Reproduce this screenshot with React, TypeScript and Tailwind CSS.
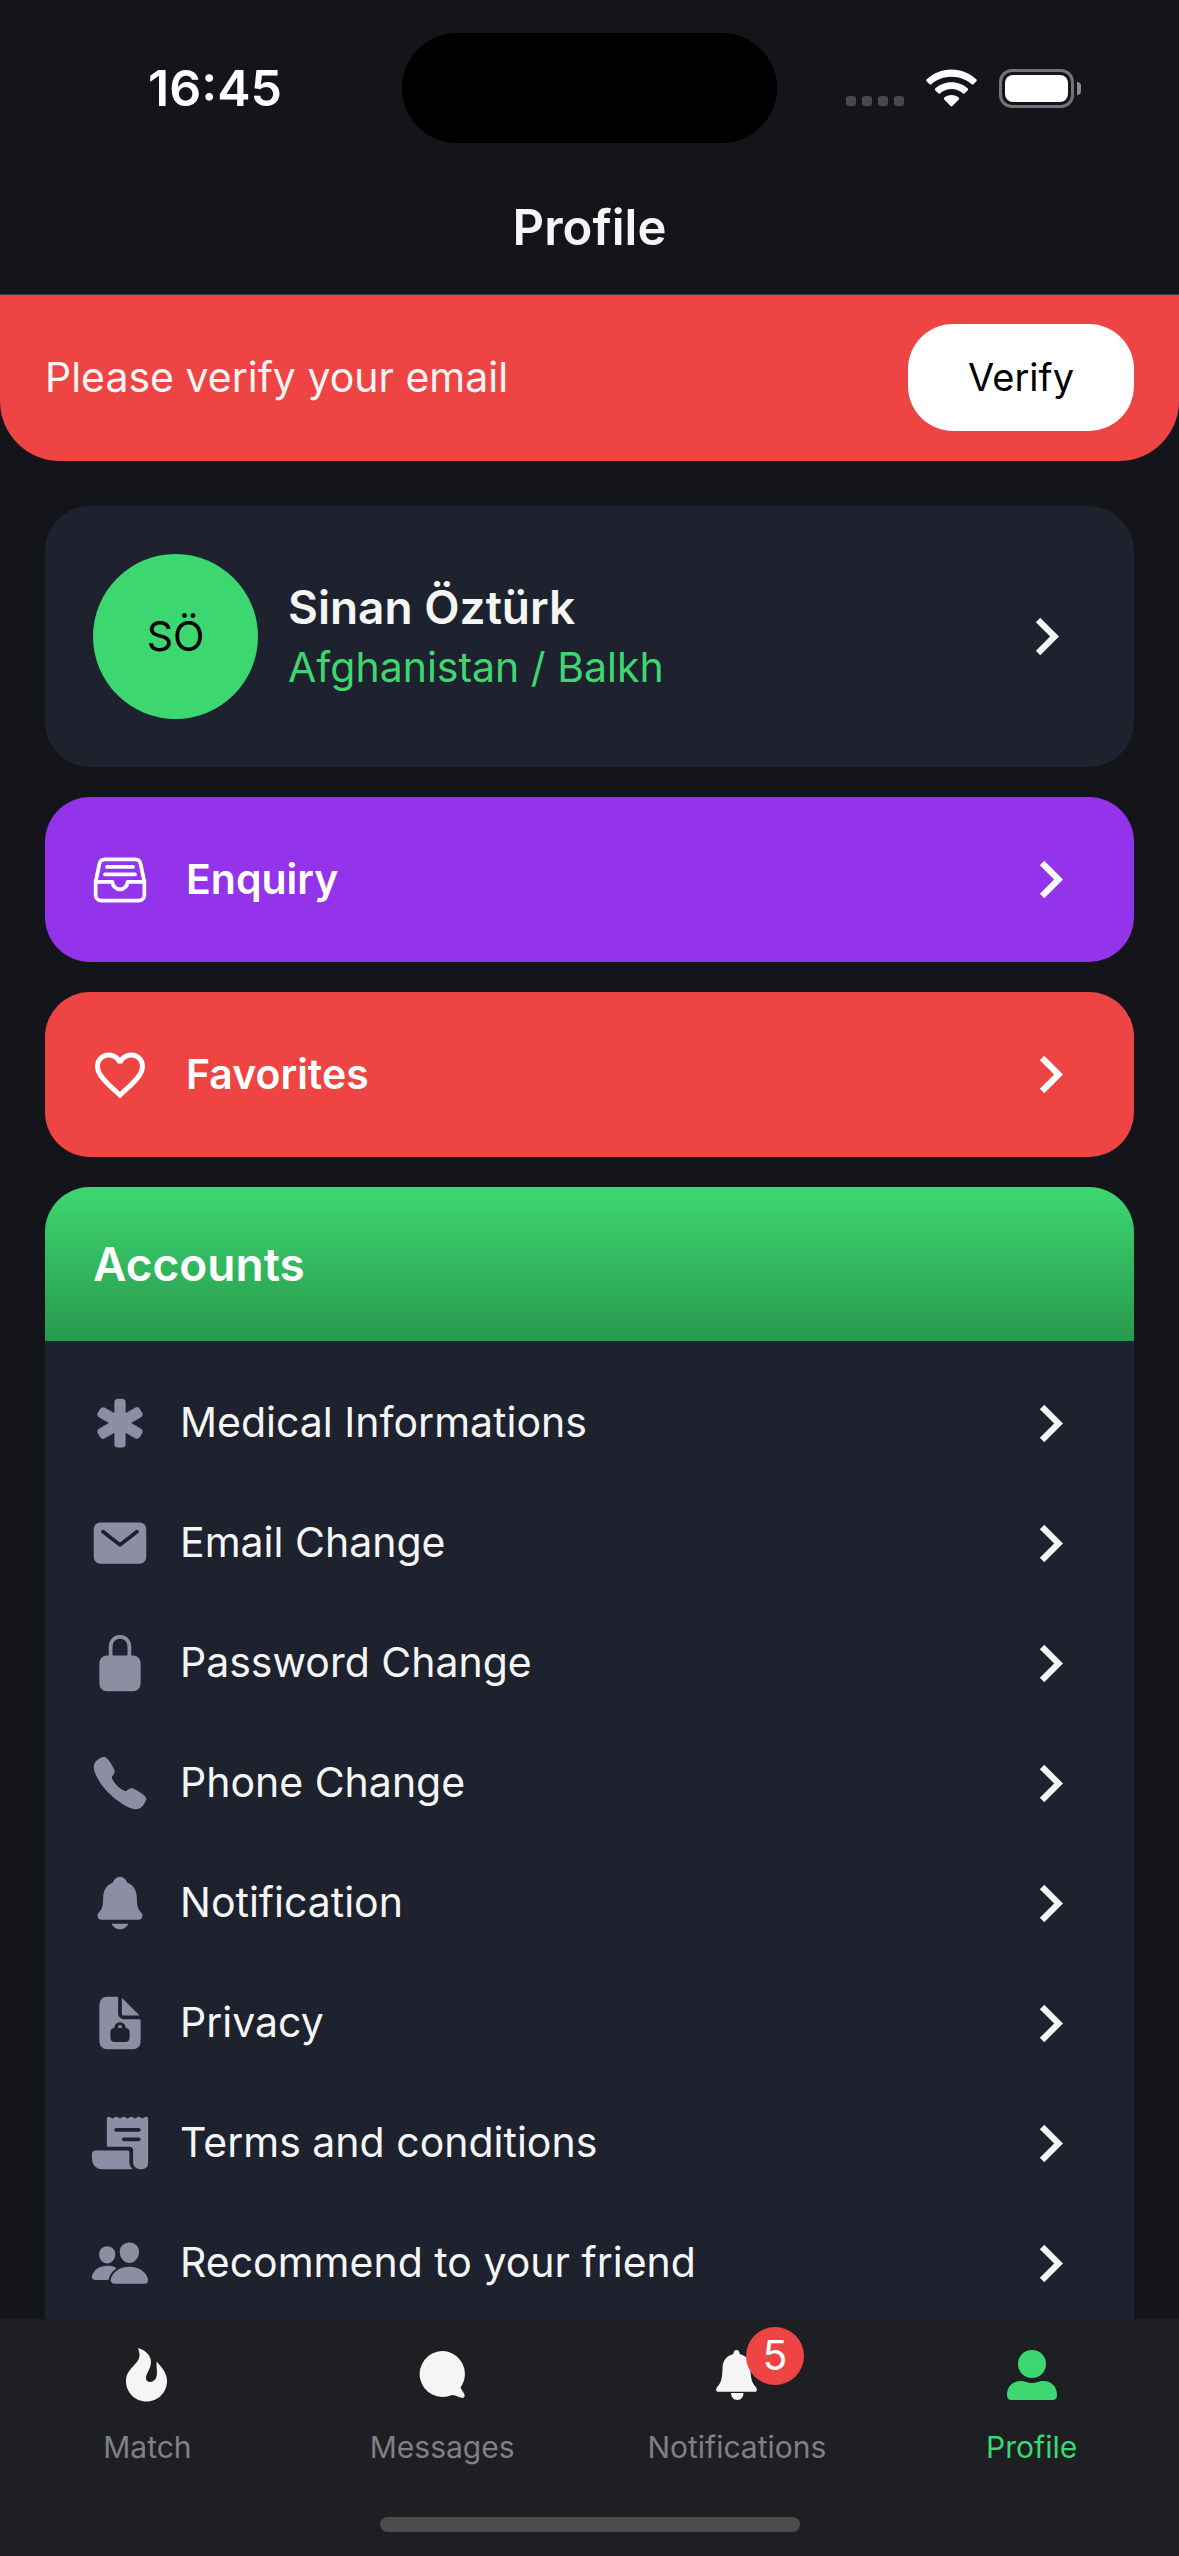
import { MdChevronRight, MdFavoriteBorder } from "react-icons/md";
import {
  IoCall,
  IoFileTrayFullOutline,
  IoLockClosed,
  IoMail,
  IoMedical,
  IoNotifications,
  IoPeople,
  IoReceipt,
} from "react-icons/io5";

function WifiIcon() {
  return (
    <svg viewBox="0 0 51 38" className="h-[38px] w-[51px]" fill="currentColor" aria-hidden="true">
      <path d="M25.5 0.5C35.3 0.5 43.8 4.3 50.3 10.3c.6.6.6 1.3.1 1.9l-3 3c-.5.5-1.200.5-1.800 0C40.200 10.400 33.200 7.700 25.500 7.700S10.800 10.400 5.400 15.200c-.6.5-1.300.5-1.800 0l-3-3c-.5-.6-.5-1.300.1-1.900C7.200 4.300 15.700.5 25.500.5Z" />
      <path d="M25.500 13.200c6.300 0 11.900 2.300 16.200 6.200.6.5.6 1.200.1 1.800l-3.100 3.100c-.5.5-1.200.5-1.700.1-3.200-2.700-7.200-4.300-11.500-4.300s-8.300 1.600-11.500 4.300c-.5.4-1.200.4-1.700-.1l-3.100-3.100c-.5-.6-.5-1.300.1-1.800 4.300-3.900 9.900-6.200 16.200-6.200Z" />
      <path d="M25.500 26c2.800 0 5.300 1 7.200 2.600.6.5.6 1.200.1 1.800l-6.400 6.600c-.5.6-1.300.6-1.800 0l-6.400-6.600c-.5-.6-.5-1.300.1-1.800C20.200 27 22.700 26 25.500 26Z" />
    </svg>
  );
}

function StatusBar() {
  return (
    <div className="grid h-44 grid-cols-[1fr_375px_1fr] items-center">
      <span className="pl-7 text-center text-[50px] leading-none font-semibold text-white">16:45</span>
      <span className="h-[110px] rounded-full bg-black" />
      <div className="ml-[69px] flex items-center text-white">
        <div className="mt-[26px] flex gap-1.5">
          {[0, 1, 2, 3].map((dot) => (
            <span key={dot} className="size-2.5 rounded-[3px] bg-[#48494d]" />
          ))}
        </div>
        <div className="ml-[22px]">
          <WifiIcon />
        </div>
        <div className="ml-[22px] h-[39px] w-[75px] rounded-[13px] border-[3px] border-[#737478] p-[3px]">
          <div className="h-full rounded-lg bg-white" />
        </div>
        <span className="ml-[3px] h-[13px] w-1 rounded-r-full bg-[#8a8b8e]" />
      </div>
    </div>
  );
}

function Chevron() {
  return <MdChevronRight className="size-[75px] shrink-0" aria-hidden="true" />;
}

function DocumentLockIcon({ className }: { className?: string }) {
  return (
    <svg viewBox="0 0 512 512" className={className} fill="currentColor" fillRule="evenodd" aria-hidden="true">
      <path d="M428 224H288a48 48 0 0 1-48-48V36a4 4 0 0 0-4-4h-92a64 64 0 0 0-64 64v320a64 64 0 0 0 64 64h224a64 64 0 0 0 64-64V228a4 4 0 0 0-4-4ZM208 297a48 48 0 0 1 96 0c20 2 34 16 34 35v50c0 22-14 36-36 36h-92c-22 0-36-14-36-36v-50c0-19 14-33 34-35ZM240 297h32a16 16 0 0 0-32 0Z" />
      <path d="M240 296h32v-6a16 16 0 0 0-32 0ZM419.220 188.590 275.410 44.780a2 2 0 0 0-3.410 1.410V176a16 16 0 0 0 16 16h129.810a2 2 0 0 0 1.410-3.410Z" />
    </svg>
  );
}

function FlameIcon() {
  return (
    <svg viewBox="0 0 42 54" className="h-[54px] w-[42px]" fill="currentColor" aria-hidden="true">
      <path d="M12.300 0C19 2 25 7 25 14c0 7-5 11-5 16.500 0 2 1.800 3.500 4.200 3.500 4 0 6.800-4 6.800-9 0-4.500-1-8-.3-11.500C35 19 41 24 41 33c0 11.500-9 20.500-20.500 20.500S0 44.500 0 33c0-6 2.500-9.500 6-13.500C10 15 13.500 12 13.500 7c0-3-1.200-5-1.200-7Z" />
    </svg>
  );
}

function MessageIcon() {
  return (
    <svg viewBox="0 0 46 48" className="h-12 w-[46px]" fill="currentColor" aria-hidden="true">
      <path d="M23 0a23 23 0 0 1 18.500 36.500c1 2.500 3 4.500 4 7 .6 2.200-.8 3.800-3 3.300-3.500-.8-6.500-2.800-9.500-2.800A23 23 0 1 1 23 0Z" />
    </svg>
  );
}

function BellIcon() {
  return (
    <svg viewBox="0 0 42 50" className="h-[50px] w-[42px]" fill="currentColor" aria-hidden="true">
      <path d="M20.500 0c1.900 0 3 1.400 3.200 4C31 6 34.300 11 34.500 18c.2 9.500 1 14.500 5.300 19 1.500 1.600 1.700 4.800-1 4.800H2.200c-2.700 0-2.500-3.200-1-4.800 4.300-4.500 5.100-9.500 5.300-19C6.700 11 10 6 17.300 4c.2-2.600 1.300-4 3.200-4ZM15 43h12.500c0 4.200-2.500 7-6.200 7S15 47.200 15 43Z" />
    </svg>
  );
}

function PersonIcon() {
  return (
    <svg viewBox="0 0 50 50" className="size-[50px]" fill="currentColor" aria-hidden="true">
      <circle cx="25" cy="14" r="14" />
      <path d="M14 31c4 0 6 2 11 2s7-2 11-2c9 0 14 6 14 14 0 3-1.500 5-5 5H5c-3.500 0-5-2-5-5 0-8 5-14 14-14Z" />
    </svg>
  );
}

const accountItems = [
  { label: "Medical Informations", Icon: IoMedical },
  { label: "Email Change", Icon: IoMail },
  { label: "Password Change", Icon: IoLockClosed },
  { label: "Phone Change", Icon: IoCall },
  { label: "Notification", Icon: IoNotifications },
  { label: "Privacy", Icon: DocumentLockIcon },
  { label: "Terms and conditions", Icon: IoReceipt },
  { label: "Recommend to your friend", Icon: IoPeople },
];

const tabs = [
  { label: "Match", Icon: FlameIcon, active: false, badge: 0 },
  { label: "Messages", Icon: MessageIcon, active: false, badge: 0 },
  { label: "Notifications", Icon: BellIcon, active: false, badge: 5 },
  { label: "Profile", Icon: PersonIcon, active: true, badge: 0 },
];

export default function App() {
  return (
    <div className="flex h-screen flex-col overflow-hidden bg-[#14151a] font-['Inter',sans-serif] text-[#f5f5f5]">
      <header className="shrink-0 border-b border-[#3c3d41]">
        <StatusBar />
        <h1 className="pt-5 pb-[34px] text-center text-[49px] leading-16 font-semibold">Profile</h1>
      </header>

      <main className="flex min-h-0 flex-1 flex-col overflow-hidden">
        <section className="flex shrink-0 items-center justify-between rounded-b-[60px] bg-[#ef4444] px-[45px] pt-[29px] pb-[30px]">
          <p className="text-[41px] leading-none">Please verify your email</p>
          <button type="button" className="h-[107px] rounded-[45px] bg-white px-15 text-[38px] text-black">
            Verify
          </button>
        </section>

        <div className="flex flex-col gap-[30px] px-[45px] pt-[45px]">
          <a href="#profile" className="flex items-center rounded-[45px] bg-[#1e222e] py-12 pr-[50px] pl-12">
            <span className="flex size-[165px] items-center justify-center rounded-full bg-[#3dd771] text-[41px] text-black">
              SÖ
            </span>
            <span className="ml-[30px] flex flex-1 flex-col">
              <span className="text-[46px] leading-15 font-semibold">Sinan Öztürk</span>
              <span className="text-[41px] leading-15 text-[#3dd771]">Afghanistan / Balkh</span>
            </span>
            <Chevron />
          </a>

          <a
            href="#enquiry"
            className="flex h-[165px] items-center gap-9 rounded-[45px] bg-[#9333ea] pr-[46px] pl-[45px] text-white"
          >
            <IoFileTrayFullOutline className="size-15" aria-hidden="true" />
            <span className="flex-1 text-[41px] font-semibold">Enquiry</span>
            <Chevron />
          </a>

          <a
            href="#favorites"
            className="flex h-[165px] items-center gap-9 rounded-[45px] bg-[#ef4444] pr-[46px] pl-[45px] text-white"
          >
            <MdFavoriteBorder className="size-15" aria-hidden="true" />
            <span className="flex-1 text-[41px] font-semibold">Favorites</span>
            <Chevron />
          </a>

          <section className="overflow-hidden rounded-t-[45px] bg-[#1e222e]">
            <h2 className="flex h-[154px] items-center bg-linear-to-b from-[#3dd771] to-[#28994d] px-12 text-[46px] font-semibold text-white">
              Accounts
            </h2>
            <ul className="pt-[22px] pb-6">
              {accountItems.map(({ label, Icon }) => (
                <li key={label}>
                  <a href="#account" className="flex h-30 items-center gap-[30px] pr-[46px] pl-[45px]">
                    <Icon className="size-15 text-[#8c8fa3]" />
                    <span className="flex-1 text-[41px]">{label}</span>
                    <Chevron />
                  </a>
                </li>
              ))}
            </ul>
          </section>
        </div>
      </main>

      <nav className="shrink-0 bg-[#1e1f23] pt-6 pb-6">
        <div className="grid grid-cols-4">
          {tabs.map(({ label, Icon, active, badge }) => (
            <a
              key={label}
              href="#tab"
              aria-current={active ? "page" : undefined}
              className={`flex flex-col items-center gap-5 ${active ? "text-[#3dd771]" : "text-[#808084]"}`}
            >
              <span className={`relative flex h-16 items-center ${active ? "" : "text-[#f5f5f5]"}`}>
                <Icon />
                {badge > 0 && (
                  <span className="absolute -top-4 left-[30px] flex size-[58px] items-center justify-center rounded-full bg-[#ef4444] text-[41px] text-white">
                    {badge}
                  </span>
                )}
              </span>
              <span className="text-[30px] leading-10">{label}</span>
            </a>
          ))}
        </div>
        <div className="mx-auto mt-[50px] h-[15px] w-[420px] rounded-full bg-[#4b4b4b]" />
      </nav>
    </div>
  );
}
